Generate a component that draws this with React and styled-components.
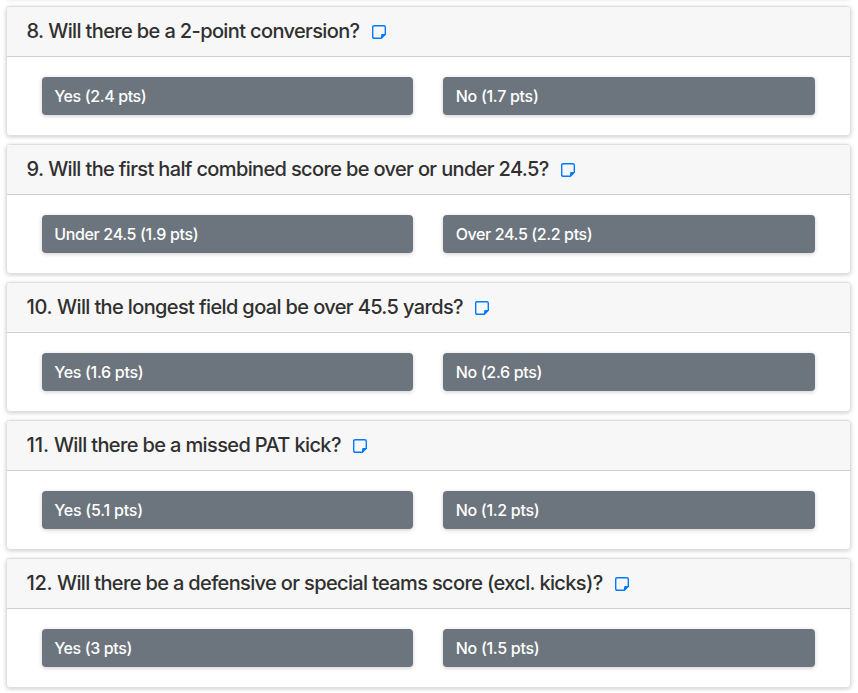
import styled, { createGlobalStyle } from "styled-components";

const questions = [
  {
    id: 8,
    text: "Will there be a 2-point conversion?",
    tracking: -0.63,
    numberTracking: -0.6,
    answers: [
      { label: "Yes (2.4 pts)", tracking: -0.38 },
      { label: "No (1.7 pts)", tracking: -0.28 },
    ],
  },
  {
    id: 9,
    text: "Will the first half combined score be over or under 24.5?",
    tracking: -0.64,
    numberTracking: -0.6,
    answers: [
      { label: "Under 24.5 (1.9 pts)", tracking: -0.34 },
      { label: "Over 24.5 (2.2 pts)", tracking: -0.38 },
    ],
  },
  {
    id: 10,
    text: "Will the longest field goal be over 45.5 yards?",
    tracking: -0.63,
    numberTracking: -0.3,
    answers: [
      { label: "Yes (1.6 pts)", tracking: -0.3 },
      { label: "No (2.6 pts)", tracking: -0.32 },
    ],
  },
  {
    id: 11,
    text: "Will there be a missed PAT kick?",
    tracking: -0.63,
    numberTracking: 0,
    answers: [
      { label: "Yes (5.1 pts)", tracking: -0.21 },
      { label: "No (1.2 pts)", tracking: -0.3 },
    ],
  },
  {
    id: 12,
    text: "Will there be a defensive or special teams score (excl. kicks)?",
    tracking: -0.645,
    numberTracking: -0.3,
    answers: [
      { label: "Yes (3 pts)", tracking: -0.37 },
      { label: "No (1.5 pts)", tracking: -0.28 },
    ],
  },
];

export default function App() {
  return (
    <>
      <GlobalStyle />
      <QuestionList>
        {questions.map((question) => {
          return (
            <Card key={question.id}>
              <CardHeader>
                <Title $tracking={question.tracking}>
                  <TitleNumber $tracking={question.numberTracking}>
                    {question.id}.
                  </TitleNumber>{" "}
                  {question.text}
                </Title>
                <NoteIcon />
              </CardHeader>
              <CardBody>
                {question.answers.map((answer) => {
                  return (
                    <AnswerButton
                      type="button"
                      key={answer.label}
                      $tracking={answer.tracking}
                    >
                      {answer.label}
                    </AnswerButton>
                  );
                })}
              </CardBody>
            </Card>
          );
        })}
      </QuestionList>
    </>
  );
}

function NoteIcon() {
  return (
    <StyledNoteIcon viewBox="0 0 14 14" aria-hidden="true">
      <path
        d="M2.2 .7H11.8Q13.3 .7 13.3 2.2V9.2L9.2 13.3H2.2Q.7 13.3 .7 11.8V2.2Q.7 .7 2.2 .7Z"
        fill="none"
        stroke="currentColor"
        strokeWidth="1.4"
      />
      <path d="M13.8 9V9.6L9.6 13.8H9V10.4Q9 9 10.4 9Z" fill="currentColor" />
    </StyledNoteIcon>
  );
}

const GlobalStyle = createGlobalStyle`
  * {
    box-sizing: border-box;
  }

  body {
    margin: 0;
    background-color: white;
    color: #303030;
    font-family: Inter, "Liberation Sans", sans-serif;
  }
`;

const shadow = "0 1px 4px rgba(0, 0, 0, 0.2)";

const QuestionList = styled.main`
  display: flex;
  flex-direction: column;
  gap: 8px;
  padding: 0 7px 4px 6px;

  /* bottom edge of the card scrolled out above */
  &::before {
    content: "";
    height: 8px;
    margin-top: -10px;
    border-radius: 4px;
    box-shadow: ${shadow};
  }
`;

const Card = styled.section`
  height: 130px;
  border: 1px solid rgba(0, 0, 0, 0.125);
  border-radius: 4px;
  box-shadow: ${shadow};
`;

const CardHeader = styled.header`
  display: flex;
  align-items: center;
  height: 50px;
  padding: 0 19.5px 2px;
  background-color: #f7f7f7;
  border-bottom: 1px solid rgba(0, 0, 0, 0.16);
  border-radius: 3px 3px 0 0;
`;

const Title = styled.h5`
  margin: 0;
  font-size: 20px;
  font-weight: 500;
  line-height: 24px;
  letter-spacing: ${(props) => props.$tracking}px;
  white-space: nowrap;
`;

const TitleNumber = styled.span`
  letter-spacing: ${(props) => props.$tracking}px;
`;

const StyledNoteIcon = styled.svg`
  width: 14px;
  height: 14px;
  margin: 3px 0 0 12.4px;
  color: #007bff;
`;

const CardBody = styled.div`
  display: grid;
  grid-template-columns: 1fr 1fr;
  gap: 30px;
  padding: 20px 35.3px 20px 34.7px;
`;

const AnswerButton = styled.button`
  height: 38px;
  padding: 0 12.5px;
  border: 0;
  border-radius: 4px;
  background-color: #6c757d;
  box-shadow: ${shadow};
  color: white;
  font: 450 16px/24px Inter, "Liberation Sans", sans-serif;
  letter-spacing: ${(props) => props.$tracking}px;
  text-align: left;
`;
